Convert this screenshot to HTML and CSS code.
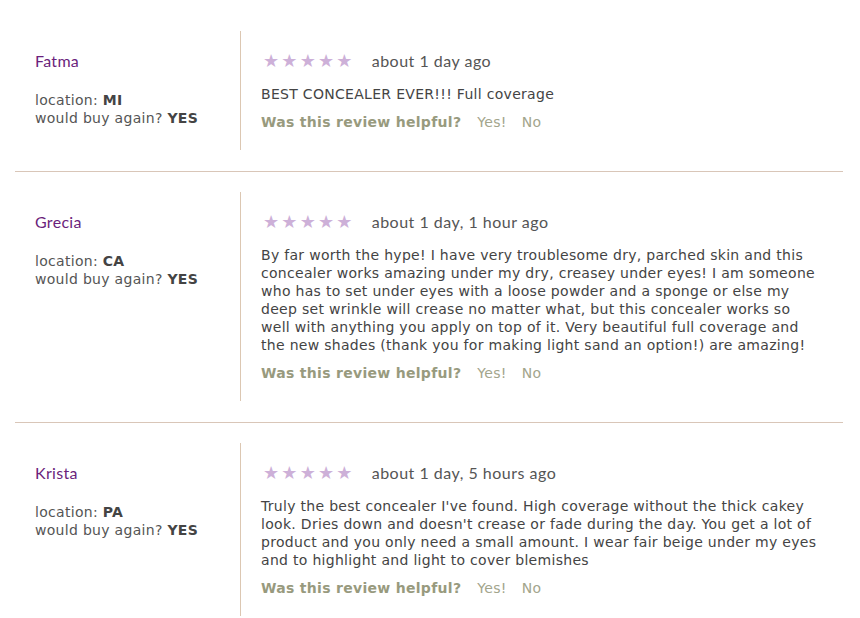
FILE: index.html
```html
<!DOCTYPE html>
<html>
<head>
<meta charset="utf-8">
<link rel="stylesheet" href="styles.css">
</head>
<body>
<div class="reviews">
  <div class="review">
    <div class="author">
      <div class="name">Fatma</div>
      <div class="meta">location: <b>MI</b></div>
      <div class="meta">would buy again? <b>YES</b></div>
    </div>
    <div class="body">
      <div class="head"><span class="stars">★★★★★</span><span class="date">about 1 day ago</span></div>
      <p class="text">BEST CONCEALER EVER!!! Full coverage</p>
      <div class="helpful"><b>Was this review helpful?</b><span class="vote">Yes!</span><span class="vote">No</span></div>
    </div>
  </div>
  <div class="review">
    <div class="author">
      <div class="name">Grecia</div>
      <div class="meta">location: <b>CA</b></div>
      <div class="meta">would buy again? <b>YES</b></div>
    </div>
    <div class="body">
      <div class="head"><span class="stars">★★★★★</span><span class="date">about 1 day, 1 hour ago</span></div>
      <p class="text">By far worth the hype! I have very troublesome dry, parched skin and this concealer works amazing under my dry, creasey under eyes! I am someone who has to set under eyes with a loose powder and a sponge or else my deep set wrinkle will crease no matter what, but this concealer works so well with anything you apply on top of it. Very beautiful full coverage and the new shades (thank you for making light sand an option!) are amazing!</p>
      <div class="helpful"><b>Was this review helpful?</b><span class="vote">Yes!</span><span class="vote">No</span></div>
    </div>
  </div>
  <div class="review">
    <div class="author">
      <div class="name">Krista</div>
      <div class="meta">location: <b>PA</b></div>
      <div class="meta">would buy again? <b>YES</b></div>
    </div>
    <div class="body">
      <div class="head"><span class="stars">★★★★★</span><span class="date">about 1 day, 5 hours ago</span></div>
      <p class="text">Truly the best concealer I've found. High coverage without the thick cakey look. Dries down and doesn't crease or fade during the day. You get a lot of product and you only need a small amount. I wear fair beige under my eyes and to highlight and light to cover blemishes</p>
      <div class="helpful"><b>Was this review helpful?</b><span class="vote">Yes!</span><span class="vote">No</span></div>
    </div>
  </div>
</div>
</body>
</html>
```

FILE: styles.css
```css
html, body {
  margin: 0;
  padding: 0;
  background: #ffffff;
}
body {
  font-family: "DejaVu Sans", Verdana, sans-serif;
  font-size: 14px;
  letter-spacing: 0.3px;
  color: #444444;
}
.reviews {
  padding: 11px 17px 0 15px;
}
.review {
  display: flex;
  padding: 20px 0 21px;
  border-bottom: 1px solid #d9c6b8;
}
.review:last-child {
  border-bottom: none;
}
.author {
  width: 205px;
  flex: none;
  padding: 19px 0 0 20px;
  border-right: 1px solid #dcc7b2;
}
.name {
  font-family: "Lato", "Open Sans", sans-serif;
  font-size: 16px;
  letter-spacing: 0.3px;
  line-height: 22px;
  color: #6b1f7c;
  margin-bottom: 19px;
}
.meta {
  line-height: 18px;
  color: #555555;
}
.meta b {
  color: #444444;
}
.body {
  flex: 1;
  padding: 18px 20px 19px 20px;
}
.head {
  display: flex;
  align-items: center;
  height: 22px;
}
.stars {
  color: #cdb0d8;
  font-size: 18px;
  letter-spacing: 2.2px;
  margin-left: 2px;
  margin-right: 17px;
}
.date {
  font-family: "Lato", "Open Sans", sans-serif;
  font-size: 16px;
  letter-spacing: 0.5px;
  color: #555555;
}
.text {
  margin: 14px 0 10px;
  line-height: 18px;
}
.helpful {
  line-height: 18px;
  color: #9c9e84;
}
.helpful b {
  color: #989a7e;
  margin-right: 16px;
}
.vote {
  color: #a3a58c;
  margin-right: 15px;
}
```
